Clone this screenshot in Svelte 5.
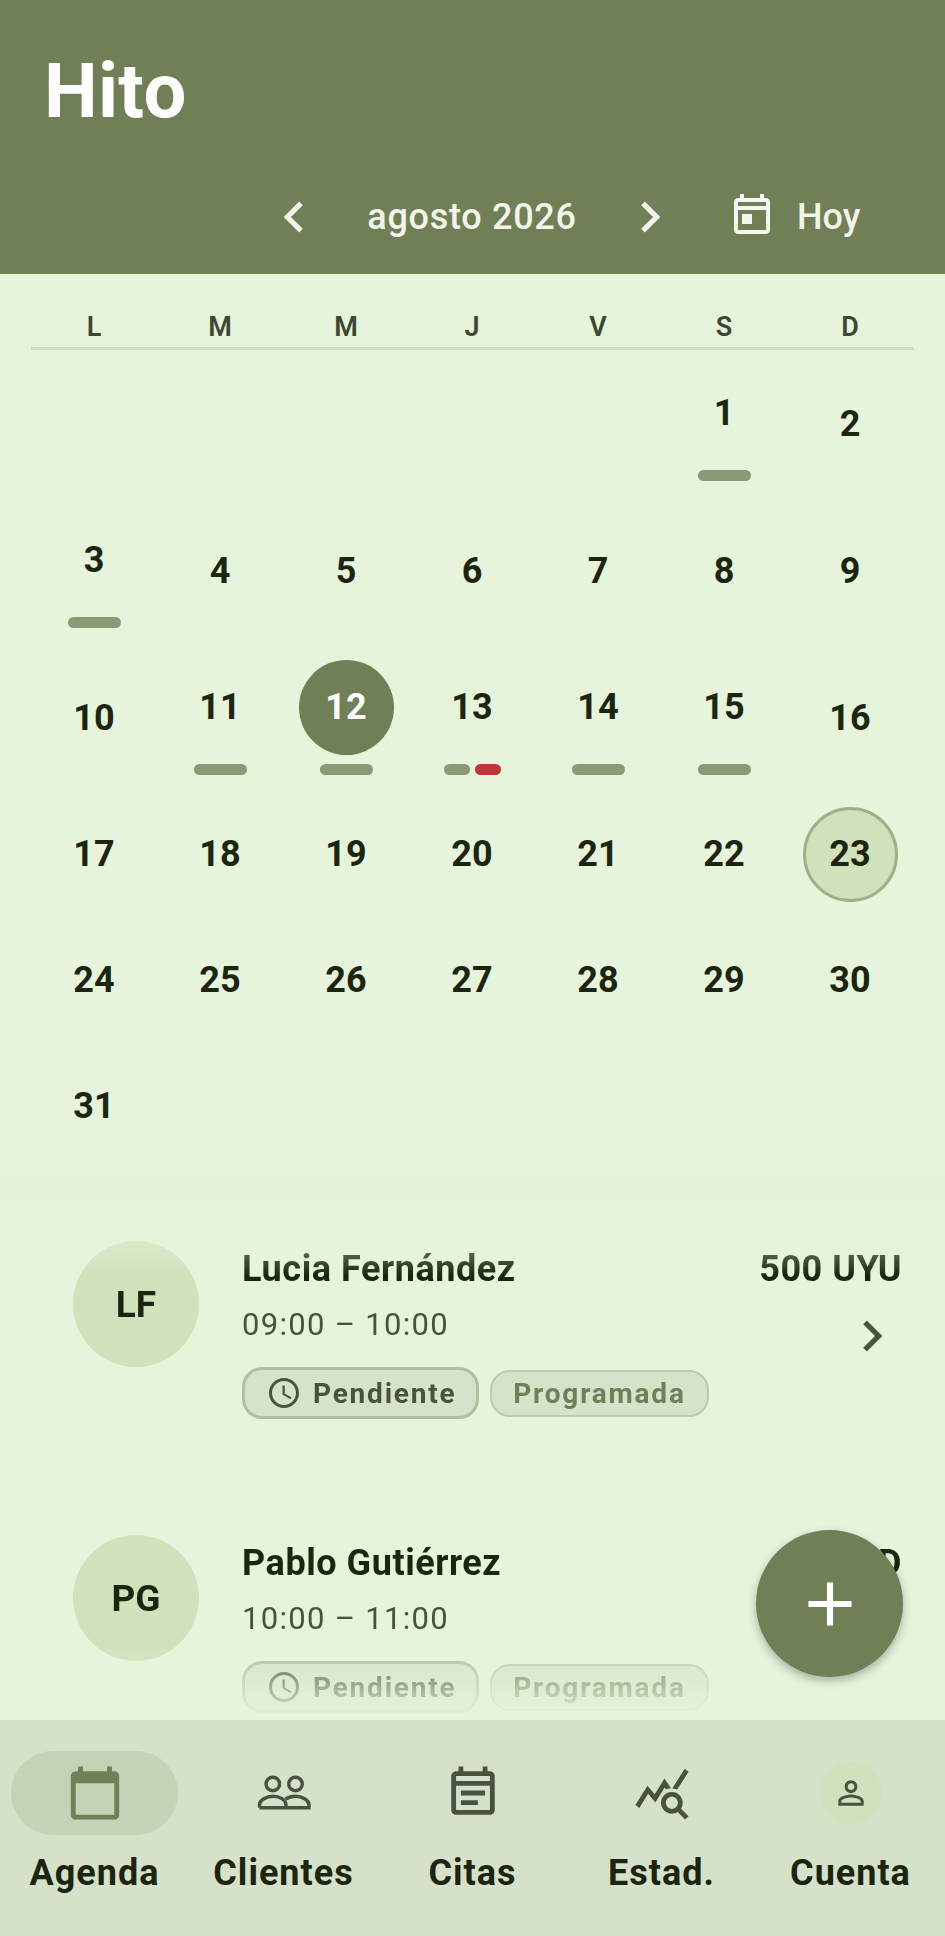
<script lang="ts">
	type Day = { n: number; bars?: string[]; kind?: 'selected' | 'today' };

	const weekdays = ['L', 'M', 'M', 'J', 'V', 'S', 'D'];
	const blanks = [0, 1, 2, 3, 4];

	const events: Record<number, string[]> = {
		1: ['one'],
		3: ['one'],
		11: ['one'],
		12: ['one'],
		13: ['half', 'red'],
		14: ['one'],
		15: ['one']
	};

	const days: Day[] = Array.from({ length: 31 }, (_, i) => {
		const n = i + 1;
		return {
			n,
			bars: events[n],
			kind: n === 12 ? 'selected' : n === 23 ? 'today' : undefined
		};
	});

	const appointments = [
		{ initials: 'LF', name: 'Lucia Fernández', time: '09:00 – 10:00', price: '500 UYU' },
		{ initials: 'PG', name: 'Pablo Gutiérrez', time: '10:00 – 11:00', price: '50 USD' }
	];
</script>

<div class="app">
	<header class="header">
		<h1>Hito</h1>
		<div class="month-row">
			<svg class="chev" viewBox="0 0 24 24"><path d="M15.41 7.41L14 6l-6 6 6 6 1.41-1.41L10.83 12z" /></svg>
			<span class="month">agosto 2026</span>
			<svg class="chev" viewBox="0 0 24 24"><path d="M10 6L8.59 7.41 13.17 12l-4.58 4.59L10 18l6-6z" /></svg>
			<div class="today-btn">
				<svg class="today-icon" viewBox="0 1.5 24 24">
					<path d="M19 4h-1V2h-2v2H8V2H6v2H5C3.9 4 3 4.9 3 6v14c0 1.1.9 2 2 2h14c1.1 0 2-.9 2-2V6c0-1.1-.9-2-2-2zm0 16H5V10h14v10zm0-12H5V6h14v2zM7 12h5v5H7z" />
				</svg>
				<span>Hoy</span>
			</div>
		</div>
	</header>

	<section class="calendar">
		<div class="weekdays">
			{#each weekdays as w}
				<span>{w}</span>
			{/each}
		</div>
		<div class="grid">
			{#each blanks as b (b)}
				<div></div>
			{/each}
			{#each days as d (d.n)}
				<div class="cell">
					<div class="num {d.kind ?? ''}">{d.n}</div>
					{#if d.bars}
						<div class="bars">
							{#each d.bars as bar}
								<i class={bar}></i>
							{/each}
						</div>
					{/if}
				</div>
			{/each}
		</div>
	</section>

	<section class="list">
		{#each appointments as a (a.initials)}
			<article class="card">
				<div class="avatar">{a.initials}</div>
				<div class="body">
					<div class="name">{a.name}</div>
					<div class="time">{a.time}</div>
					<div class="chips">
						<span class="chip pending">
							<svg viewBox="0 0 24 24"><path d="M11.99 2C6.47 2 2 6.48 2 12s4.47 10 9.99 10C17.52 22 22 17.52 22 12S17.52 2 11.99 2zM12 20c-4.42 0-8-3.58-8-8s3.58-8 8-8 8 3.58 8 8-3.58 8-8 8zm.5-13H11v6l5.25 3.15.75-1.23-4.5-2.67z" /></svg>
							Pendiente
						</span>
						<span class="chip scheduled">Programada</span>
					</div>
				</div>
				<div class="side">
					<div class="price">{a.price}</div>
					<svg class="card-chev" viewBox="0 0 24 24"><path d="M10 6L8.59 7.41 13.17 12l-4.58 4.59L10 18l6-6z" /></svg>
				</div>
			</article>
		{/each}
	</section>

	<button class="fab" aria-label="Nueva cita">
		<svg viewBox="0 0 24 24"><path d="M19 13h-6v6h-2v-6H5v-2h6V5h2v6h6v2z" /></svg>
	</button>

	<nav class="nav">
		<div class="nav-item">
			<div class="nav-icon active">
				<svg viewBox="0 0 24 24"><path d="M20 3h-1V1h-2v2H7V1H5v2H4c-1.1 0-2 .9-2 2v16c0 1.1.9 2 2 2h16c1.1 0 2-.9 2-2V5c0-1.1-.9-2-2-2zm0 18H4V8h16v13z" /></svg>
			</div>
			<span>Agenda</span>
		</div>
		<div class="nav-item">
			<div class="nav-icon">
				<svg class="people" viewBox="0 0 58 58">
					<circle cx="17.8" cy="20" r="6.8" />
					<circle cx="40.5" cy="20" r="6.8" />
					<path d="M4.5 43.7v-3c0-4.5 7-8.5 13.5-8.5 6.5 0 13 3.5 13 8.5v3" />
					<path d="M4.5 43.7H54v-3c0-4.5-7-8.5-13.5-8.5-3.5 0-7 1-10 3" />
				</svg>
			</div>
			<span>Clientes</span>
		</div>
		<div class="nav-item">
			<div class="nav-icon">
				<svg viewBox="0 1 24 24"><path d="M19 4h-1V2h-2v2H8V2H6v2H5C3.9 4 3 4.9 3 6v14c0 1.1.9 2 2 2h14c1.1 0 2-.9 2-2V6c0-1.1-.9-2-2-2zm0 16H5V10h14v10zm0-12H5V6h14v2zM7 12h10v2H7zm0 4h7v2H7z" /></svg>
			</div>
			<span>Citas</span>
		</div>
		<div class="nav-item">
			<div class="nav-icon">
				<svg viewBox="0 0 24 24"><path d="M19.88 18.47c.44-.7.7-1.51.7-2.39 0-2.49-2.01-4.5-4.5-4.5s-4.5 2.01-4.5 4.5 2.01 4.5 4.49 4.5c.88 0 1.7-.26 2.39-.7L21.58 23 23 21.58l-3.12-3.11zm-3.8.11c-1.38 0-2.5-1.12-2.5-2.5s1.12-2.5 2.5-2.5 2.5 1.12 2.5 2.5-1.12 2.5-2.5 2.5zm-.36-8.5c-.74.02-1.45.18-2.1.45l-.55-.83-3.8 6.18-3.01-3.52-3.63 5.81L1 17l5-8 3 3.5L13 6l2.72 4.08zm2.59.5c-.64-.28-1.33-.45-2.05-.49L21.38 2 23 3.18l-4.69 7.4z" /></svg>
			</div>
			<span>Estad.</span>
		</div>
		<div class="nav-item">
			<div class="nav-icon account">
				<div class="account-bg">
					<svg viewBox="0 0 24 24"><path d="M12 5.9c1.16 0 2.1.94 2.1 2.1s-.94 2.1-2.1 2.1S9.9 9.16 9.9 8s.94-2.1 2.1-2.1m0 9c2.97 0 6.1 1.46 6.1 2.1v1.1H5.9V17c0-.64 3.13-2.1 6.1-2.1M12 4C9.79 4 8 5.79 8 8s1.79 4 4 4 4-1.79 4-4-1.79-4-4-4zm0 9c-2.67 0-8 1.34-8 4v3h16v-3c0-2.66-5.33-4-8-4z" /></svg>
				</div>
			</div>
			<span>Cuenta</span>
		</div>
	</nav>
</div>

<style>
	:global(body) {
		margin: 0;
		background: #e7f4dc;
	}

	.app {
		position: relative;
		width: 945px;
		height: 1936px;
		display: flex;
		flex-direction: column;
		overflow: hidden;
		background: #e7f4dc;
		font-family: Roboto, sans-serif;
		color: #1b2510;
	}

	/* header */
	.header {
		height: 274px;
		flex: none;
		box-sizing: border-box;
		background: #717f56;
		color: #fff;
		padding: 48px 0 0 44px;
	}

	h1 {
		margin: 0;
		font-size: 76px;
		line-height: 86px;
		font-weight: 700;
		letter-spacing: 0.3px;
	}

	.month-row {
		display: flex;
		align-items: center;
		height: 62px;
		margin-top: 52px;
		padding-left: 219px;
		color: #f2f5ea;
	}

	.chev {
		width: 62px;
		height: 62px;
		flex: none;
		fill: #f5f7ef;
		margin-top: -1px;
	}

	.month {
		width: 294px;
		text-align: center;
		font-size: 36px;
		font-weight: 500;
		letter-spacing: 0.7px;
	}

	.today-btn {
		display: flex;
		align-items: center;
		gap: 21px;
		margin-left: 47px;
		font-size: 36px;
		font-weight: 500;
	}

	.today-icon {
		width: 48px;
		height: 48px;
		fill: #f5f7ef;
		margin-top: -1px;
	}

	/* calendar */
	.calendar {
		height: 926px;
		flex: none;
		box-sizing: border-box;
		padding: 0 31px;
		background: linear-gradient(to bottom, transparent calc(100% - 30px), #e4f1d9);
	}

	.weekdays {
		display: grid;
		grid-template-columns: repeat(7, 126px);
		height: 76px;
		box-sizing: border-box;
		padding-top: 36px;
		border-bottom: 3px solid #cfdfbb;
		font-size: 27px;
		line-height: 34px;
		font-weight: 600;
		color: #3d4733;
		text-align: center;
	}

	.grid {
		display: grid;
		grid-template-columns: repeat(7, 126px);
		align-items: center;
		justify-items: center;
	}

	.cell {
		display: flex;
		flex-direction: column;
		align-items: center;
		padding: 15.5px 0;
	}

	.num {
		width: 95px;
		height: 95px;
		box-sizing: border-box;
		border-radius: 50%;
		display: flex;
		align-items: center;
		justify-content: center;
		font-size: 36px;
		font-weight: 700;
	}

	.num.selected {
		background: #717f56;
		color: #fff;
	}

	.num.today {
		background: #d0e1bb;
		border: 3px solid #9fb088;
	}

	.bars {
		display: flex;
		gap: 5px;
		height: 11px;
		margin: 9px 0 1px;
	}

	.bars i {
		display: block;
		height: 11px;
		border-radius: 6px;
		background: #8a9a74;
	}

	.bars .one {
		width: 53px;
	}

	.bars .half,
	.bars .red {
		width: 26px;
	}

	.bars .red {
		background: #c1353a;
	}

	/* appointment list */
	.list {
		flex: 1;
		min-height: 0;
		overflow: hidden;
		box-sizing: border-box;
		padding: 41px 43px 0 73px;
		mask-image: linear-gradient(to bottom, transparent 0, #000 75px, #000 445px, transparent 520px);
	}

	.card {
		display: flex;
		height: 294px;
	}

	.avatar {
		width: 126px;
		height: 126px;
		flex: none;
		border-radius: 50%;
		background: #d0e1bb;
		display: flex;
		align-items: center;
		justify-content: center;
		font-size: 37px;
		font-weight: 700;
	}

	.body {
		flex: 1;
		margin-left: 43px;
	}

	.name {
		font-size: 36px;
		line-height: 44px;
		margin-top: 6px;
		font-weight: 700;
		letter-spacing: 0.55px;
	}

	.time {
		font-size: 31px;
		line-height: 40px;
		margin-top: 14px;
		letter-spacing: 1.3px;
		color: #49523f;
	}

	.chips {
		display: flex;
		align-items: center;
		gap: 11px;
		margin-top: 22px;
	}

	.chip {
		display: flex;
		align-items: center;
		box-sizing: border-box;
		border-radius: 20px;
		background: #d6e2c9;
		font-size: 28px;
		font-weight: 700;
		letter-spacing: 1.8px;
	}

	.chip.pending {
		height: 52px;
		width: 237px;
		padding-left: 24px;
		gap: 11px;
		border: 3px solid #b1bf9f;
		color: #495240;
	}

	.chip.pending svg {
		width: 36px;
		height: 36px;
		margin-left: -3px;
		fill: #495240;
	}

	.chip.scheduled {
		height: 47px;
		width: 219px;
		justify-content: center;
		border: 2px solid #bccaa9;
		color: #717f56;
	}

	.side {
		position: relative;
		text-align: right;
		flex: none;
	}

	.price {
		font-size: 36px;
		line-height: 44px;
		margin-top: 6px;
		font-weight: 700;
		letter-spacing: 0.55px;
	}

	.card-chev {
		display: block;
		width: 62px;
		height: 62px;
		margin: 14px -1px 0 auto;
		fill: #49523f;
	}

	/* floating add button */
	.fab {
		position: absolute;
		left: 756px;
		top: 1530px;
		width: 147px;
		height: 147px;
		padding: 0;
		border: none;
		border-radius: 50%;
		background: #717f56;
		box-shadow: 0 4px 10px rgba(0, 0, 0, 0.28);
		display: flex;
		align-items: center;
		justify-content: center;
	}

	.fab svg {
		width: 74px;
		height: 74px;
		fill: #fff;
	}

	/* bottom navigation */
	.nav {
		height: 216px;
		flex: none;
		background: #d5e1c9;
		display: grid;
		grid-template-columns: repeat(5, 189px);
	}

	.nav-item {
		display: flex;
		flex-direction: column;
		align-items: center;
		padding-top: 31px;
		font-size: 36px;
		line-height: 44px;
		font-weight: 700;
		letter-spacing: 1px;
	}

	.nav-icon {
		width: 167px;
		height: 84px;
		border-radius: 42px;
		display: flex;
		align-items: center;
		justify-content: center;
		margin-bottom: 16px;
		flex: none;
	}

	.nav-icon.active {
		background: #c5d2b5;
	}

	.nav-icon svg {
		width: 58px;
		height: 58px;
		fill: #495240;
	}

	.nav-icon.active svg {
		fill: #717f56;
	}

	.nav-icon svg.people {
		fill: none;
		stroke: #495240;
		stroke-width: 3.4;
	}

	.account-bg {
		width: 62px;
		height: 62px;
		border-radius: 50%;
		background: #d0e1bb;
		display: flex;
		align-items: center;
		justify-content: center;
	}

	.nav-icon .account-bg svg {
		width: 38px;
		height: 38px;
	}
</style>
